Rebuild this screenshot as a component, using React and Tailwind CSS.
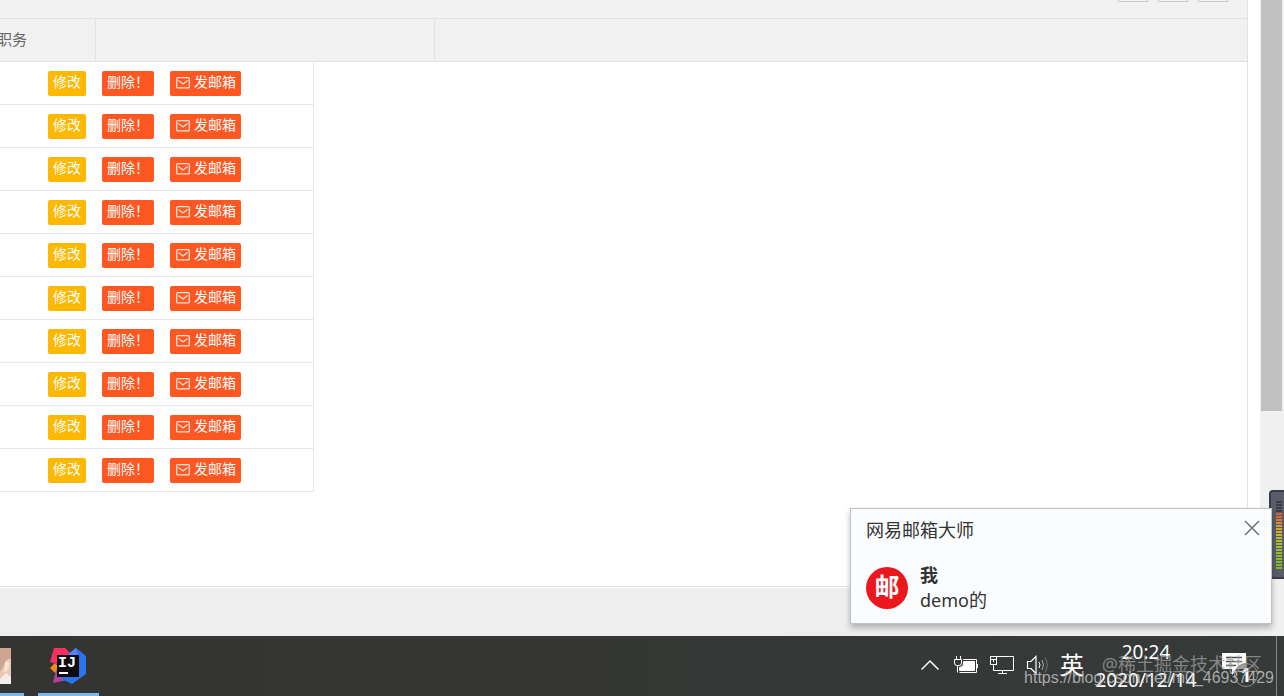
import { useState } from 'react';

const ROWS = [1, 2, 3, 4, 5, 6, 7, 8, 9, 10];

const METER = [
    'bg-[#3b3d49]', 'bg-[#3b3d49]', 'bg-[#3b3d49]', 'bg-[#3b3d49]',
    'bg-[#d9632f]', 'bg-[#dc6a2c]', 'bg-[#dc7c2c]', 'bg-[#d88f2c]',
    'bg-[#d3a02c]', 'bg-[#d0ac2c]', 'bg-[#cab52c]', 'bg-[#c4ba2c]',
    'bg-[#bdbc2c]', 'bg-[#b6bc2c]', 'bg-[#afbc2c]', 'bg-[#a8bc2c]',
    'bg-[#a0bc2c]', 'bg-[#99bc2c]', 'bg-[#92bc2c]', 'bg-[#8cbc2c]',
    'bg-[#86bc2c]', 'bg-[#80bc2c]', 'bg-[#80bc2c]',
];

function MailIcon() {
    return (
        <svg width="14" height="12" viewBox="0 0 14 12" fill="none" stroke="#ffe3d6" strokeWidth="1.3" aria-hidden="true">
            <rect x="0.7" y="0.7" width="12.6" height="10.2" rx="1" />
            <path d="M2.4 3.6 L7 7 L11.6 3.6" />
        </svg>
    );
}

function ActionRow() {
    return (
        <tr className="h-[43px]">
            <td className="border-r border-b border-[#e6e6e6] p-0 pl-12">
                <div className="flex gap-4 text-sm leading-[22px] text-white">
                    <button type="button" className="flex h-[25px] rounded-xs bg-[#ffb800] px-[5px]">修改</button>
                    <button type="button" className="flex h-[25px] rounded-xs bg-[#ff5722] px-[5px]">删除！</button>
                    <button type="button" className="flex h-[25px] gap-1 rounded-xs bg-[#ff5722] pr-[5px] pl-[6px]">
                        <span className="flex h-6 items-center"><MailIcon /></span>
                        发邮箱
                    </button>
                </div>
            </td>
        </tr>
    );
}

function TablePanel() {
    return (
        <main className="min-w-0 flex-1 border-r border-[#e2e2e2] bg-white">
            <div className="flex h-[18px] items-end justify-end gap-[10px] overflow-hidden bg-[#f2f2f2] pr-[19px] pb-4">
                <button type="button" aria-label="筛选列" className="h-8 w-[30px] shrink-0 border border-[#ccc]" />
                <button type="button" aria-label="导出" className="h-8 w-[30px] shrink-0 border border-[#ccc]" />
                <button type="button" aria-label="打印" className="h-8 w-[30px] shrink-0 border border-[#ccc]" />
            </div>
            <div className="border-y border-[#e2e2e2] bg-[#f1f1f1]">
                <table className="border-separate border-spacing-0 text-[#666]">
                    <thead>
                        <tr className="h-[42px]">
                            <th className="w-24 border-r border-[#e2e2e2] p-0 pb-[2px] text-left text-[15px] font-normal">
                                <span className="-ml-[3px]">职务</span>
                            </th>
                            <th className="w-[339px] border-r border-[#e2e2e2] p-0" />
                        </tr>
                    </thead>
                </table>
            </div>
            <table className="w-[314px] border-separate border-spacing-0">
                <tbody>
                    {ROWS.map((id) => <ActionRow key={id} />)}
                </tbody>
            </table>
        </main>
    );
}

function VolumeMeter() {
    return (
        <div className="absolute right-0 bottom-[57px] flex h-[89px] w-[15px] flex-col gap-px rounded-l-sm border-2 border-r-0 border-[#3a3c48] bg-[#5a5c6a] pt-[9px] pl-[5px]">
            {METER.map((color, i) => <div key={i} className={`h-[2px] w-[6px] ${color}`} />)}
        </div>
    );
}

function MailToast({ onClose }) {
    return (
        <section className="absolute right-3 bottom-3 flex h-[116px] w-[422px] flex-col border border-[#bfc1c3] bg-[#fafcfe] pr-[11px] pl-[15px] text-lg leading-[25px] text-[#333] shadow-[0_4px_6px_rgba(0,0,0,0.25)]">
            <div className="flex items-center justify-between pt-[9px]">
                <h2>网易邮箱大师</h2>
                <button type="button" aria-label="关闭" onClick={onClose} className="pb-[6px]">
                    <svg width="16" height="16" viewBox="0 0 16 16" stroke="#73767a" strokeWidth="1.6">
                        <path d="M1 1 L15 15 M15 1 L1 15" />
                    </svg>
                </button>
            </div>
            <div className="flex items-center gap-3 pt-5">
                <svg width="42" height="42" viewBox="0 0 42 42" aria-hidden="true">
                    <circle cx="21" cy="21" r="21" fill="#ea181d" />
                    <text x="21" y="29" textAnchor="middle" fill="#fff" className="font-['Noto_Sans_CJK_SC',sans-serif] text-[25px] font-bold">邮</text>
                </svg>
                <div>
                    <p className="font-bold">我</p>
                    <p>demo的</p>
                </div>
            </div>
        </section>
    );
}

function IdeaIcon() {
    return (
        <svg width="36" height="36" viewBox="0 0 36 36" aria-hidden="true">
            <path d="M0 20 L5 15 L9 19 L9 27 L4 24 Z" fill="#f08a1d" />
            <path d="M6 22 L14 24 L22 31 L3 35 Z" fill="#a8479a" />
            <path d="M4 0 L15 0 L21 6 L12 18 L0 14 Z" fill="#fb2f62" />
            <path d="M26 0 L36 8 L36 26 L22 36 L12 31 L18 6 Z" fill="#2b74ee" />
            <path d="M18 7 L26 0 L28 8 Z" fill="#5a82f0" />
            <rect x="7" y="7" width="22" height="22" fill="#0c0c0c" />
            <text x="8" y="19" fill="#fff" className="font-['Liberation_Mono',monospace] text-[15px] font-bold">IJ</text>
            <rect x="9" y="24" width="9" height="2" fill="#fff" />
        </svg>
    );
}

function Avatar() {
    return (
        <svg width="11" height="36" viewBox="0 0 11 36" aria-hidden="true">
            <rect width="11" height="36" rx="1" fill="#e9c9b8" />
            <path d="M0 0 H11 V11 Q6 9 4 18 L0 24 Z" fill="#cda591" />
            <path d="M5 14 Q10 11 9 19 Q8 24 4 24 Z" fill="#f8e2d4" />
            <path d="M0 31 L6 25 L11 29 V36 H0 Z" fill="#f4eeea" />
        </svg>
    );
}

function Tray() {
    return (
        <div className="flex h-full items-center text-white">
            <div className="flex items-center gap-3 pb-[2px]">
                <button type="button" aria-label="显示隐藏的图标">
                    <svg width="21" height="12" viewBox="0 0 21 12" fill="none" stroke="#fff" strokeWidth="1.5">
                        <path d="M0.5 10.5 L9 2 L17.5 10.5" />
                    </svg>
                </button>
                <svg width="24" height="18" viewBox="0 0 24 18" fill="none" stroke="#fff" aria-hidden="true">
                    <path d="M2.5 0 V4 M6.5 0 V4 M0.5 3.5 H7.5 V7 Q7.5 9.5 5 9.5 H3 Q0.5 9.5 0.5 7 Z M3.5 10 V16.5 M9 3.5 H22.5 V16.5 H5.5" />
                    <path d="M23.5 8 V12" />
                    <path d="M9.5 5.5 H20.5 V14.5 H5.5 V11.5 Q9.5 11 9.5 8 Z" fill="#fff" />
                </svg>
                <svg width="24" height="19" viewBox="0 0 24 19" fill="none" stroke="#fff" aria-hidden="true">
                    <path d="M7 0.5 H23.5 V14.5 H3.5 V9 M12.5 14.5 V17.5 M8 17.5 H17" />
                    <rect x="0.5" y="0.5" width="6" height="8" />
                    <path d="M0.5 3.5 H6.5 M3.5 4 V6" />
                </svg>
                <svg width="22" height="20" viewBox="0 0 22 20" fill="none" aria-hidden="true">
                    <path d="M1.5 6.5 H5 L10 1.5 V18.5 L5 13.5 H1.5 Z" stroke="#fff" strokeWidth="1.2" />
                    <path d="M13 7 Q15 10 13 13" stroke="#fff" />
                    <path d="M16 5 Q19 10 16 15" stroke="#aaa" />
                    <path d="M19 2.5 Q23.5 10 19 17.5" stroke="#777" />
                </svg>
                <span className="text-2xl leading-6">英</span>
            </div>
            <div className="ml-[9px] w-[106px] text-center text-[19px] leading-7 whitespace-nowrap">
                <p>20:24</p>
                <p>2020/12/14</p>
            </div>
            <button type="button" aria-label="1 条新通知" className="ml-[23px] pt-[2px]">
                <svg width="36" height="40" viewBox="0 0 36 40">
                    <path d="M0 6 H24 V22 H15 L10 28 V22 H0 Z" fill="#fff" />
                    <path d="M4 10.5 H20 M4 14.5 H20 M4 18.5 H14" stroke="#4a4d4c" strokeWidth="1.4" />
                    <circle cx="24" cy="28" r="11.5" fill="#363a38" fillOpacity="0.5" stroke="#8d908f" />
                    <text x="24" y="35" textAnchor="middle" fill="#fff" className="text-[19px] font-bold">1</text>
                </svg>
            </button>
            <div className="ml-[18px] h-full w-2 border-l border-[#858786]" />
        </div>
    );
}

function Taskbar() {
    return (
        <footer className="relative flex h-[60px] justify-between bg-linear-to-r from-[#343432] to-[#363a38]">
            <div className="flex gap-[14px]">
                <button type="button" aria-label="聊天" className="flex w-6 items-center border-b-3 border-[#76b9ed] pt-[3px]"><Avatar /></button>
                <button type="button" aria-label="IntelliJ IDEA" className="flex w-[61px] items-center border-b-3 border-[#76b9ed] pt-[3px] pl-3"><IdeaIcon /></button>
            </div>
            <Tray />
            <p className="pointer-events-none absolute right-[22px] bottom-5 text-lg leading-6 whitespace-nowrap text-[#a0a0a0]/75">@稀土掘金技术社区</p>
            <p className="pointer-events-none absolute right-[10px] bottom-[6px] font-['Liberation_Sans',sans-serif] text-base leading-6 whitespace-nowrap text-[#d0d0d0]/75">https://blog.csdn.net/m0_46937429</p>
        </footer>
    );
}

export default function App() {
    const [toastOpen, setToastOpen] = useState(true);

    return (
        <div className="flex h-screen flex-col overflow-hidden bg-[#eee] font-['Noto_Sans','Noto_Sans_CJK_SC',sans-serif]">
            <div className="relative flex min-h-0 flex-1">
                <div className="flex min-w-0 flex-1 flex-col">
                    <div className="flex min-h-0 flex-1 border-b border-[#e2e2e2] bg-white pr-3">
                        <TablePanel />
                    </div>
                    <div className="h-[49px] border-t border-white bg-[#eee]" />
                </div>
                <div className="w-6 bg-[#f0f0f0] px-px">
                    <div className="h-[411px] w-[21px] bg-[#c1c1c1]" />
                </div>
                <VolumeMeter />
                {toastOpen && <MailToast onClose={() => setToastOpen(false)} />}
            </div>
            <Taskbar />
        </div>
    );
}
